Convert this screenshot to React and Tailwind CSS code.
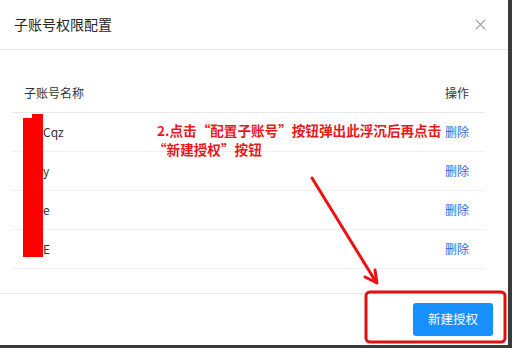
import React from "react";

const rows = ["Cqz", "y", "e", "E"];

export default function App() {
  return (
    <div
      className="relative w-[512px] h-[348px] overflow-hidden bg-[#3b3b3b]"
      style={{ fontFamily: '"Noto Sans CJK SC", "Noto Sans", sans-serif' }}
    >
      <div className="w-[508px] h-[345px] bg-white flex flex-col">
        {/* header */}
        <div className="h-[50px] shrink-0 border-b border-[#e8e8e8] flex items-center justify-between pl-[14px] pr-[22px]">
          <span className="text-[14px] text-[#262626]">子账号权限配置</span>
          <svg width="11" height="11" viewBox="0 0 12 12" className="text-[#999]">
            <path d="M1 1L11 11M11 1L1 11" stroke="currentColor" strokeWidth="1.3" />
          </svg>
        </div>

        {/* table */}
        <div className="flex-1 pt-[23px] pl-[12px] pr-[23px]">
          <div className="h-[40px] flex items-center justify-between border-b border-[#e8e8e8] pl-[12px] pr-[16px] text-[12px] text-[#333]">
            <span>子账号名称</span>
            <span>操作</span>
          </div>
          {rows.map((r, i) => (
            <div
              key={i}
              className="h-[39px] flex items-center justify-between border-b border-[#f0f0f0] pl-[31px] pr-[16px] text-[12px]"
            >
              <span className="text-[#333]">{r}</span>
              <span className="text-[#2f6ae0]">删除</span>
            </div>
          ))}
        </div>

        {/* footer */}
        <div className="h-[52px] shrink-0 border-t border-[#e8e8e8] flex items-center justify-end pr-[15px]">
          <button className="w-[80px] h-[33px] rounded-[3px] bg-[#1890ff] text-white text-[12.5px]">
            新建授权
          </button>
        </div>
      </div>

      {/* annotations */}
      <div className="absolute left-[23px] top-[118px] w-[20px] h-[139px] bg-[#ff0000]" />
      <div className="absolute left-[32px] top-[114px] w-[11px] h-[6px] bg-[#ff0000]" />

      <div className="absolute left-[157px] top-[121px] text-[13.6px] leading-[19px] font-bold text-[#e8191b] whitespace-nowrap">
        <div>2.点击“配置子账号”按钮弹出此浮沉后再点击</div>
        <div className="-ml-[4px]">“新建授权”按钮</div>
      </div>

      <svg className="absolute left-0 top-0" width="512" height="348" viewBox="0 0 512 348">
        <path d="M312 178L376 282" stroke="#ee1111" strokeWidth="3" strokeLinecap="round" fill="none" />
        <path d="M365 277L377 283L375 270" stroke="#ee1111" strokeWidth="3" strokeLinecap="round" strokeLinejoin="round" fill="none" />
        <rect x="366" y="292" width="139" height="50" rx="4" stroke="#e01010" strokeWidth="3" fill="none" />
      </svg>
    </div>
  );
}
